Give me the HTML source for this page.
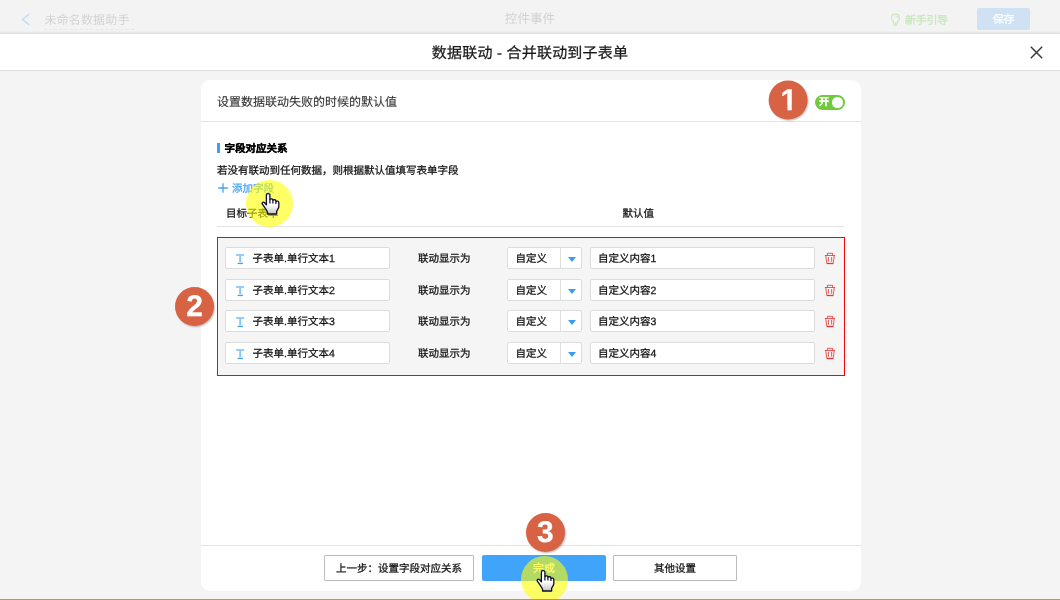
<!DOCTYPE html>
<html lang="zh-CN">
<head>
<meta charset="utf-8">
<title>数据联动 - 合并联动到子表单</title>
<style>
*{box-sizing:border-box;margin:0;padding:0}
html,body{width:1060px;height:600px;overflow:hidden}
body{position:relative;background:#f4f4f4;font-family:"Liberation Sans",sans-serif;font-size:10.5px;color:#000;line-height:1;text-rendering:geometricPrecision;-webkit-text-stroke:0.25px}
#stage{position:absolute;left:0;top:0;width:1060px;height:600px;overflow:hidden;will-change:transform}
.abs{position:absolute;white-space:nowrap}
/* top faded bar */
#topbar{position:absolute;left:0;top:0;width:1060px;height:34px;background:#f3f3f3;overflow:hidden;-webkit-text-stroke:0}
#topbar:after{content:"";position:absolute;left:0;right:0;bottom:0;height:3px;background:linear-gradient(#f3f3f3,#dcdcdc)}
#name{transform:translateY(-.5px);left:44.5px;top:12.5px;font-size:12px;line-height:14px;color:#d3d3d3;letter-spacing:0.15px}
#nameline{left:44px;top:29px;width:90px;height:0;border-top:1px dashed #e7e7e7}
#center{left:0;width:1060px;top:12px;text-align:center;font-size:12.6px;line-height:15px;color:#d2d2d2}
#guide{left:905px;top:14px;font-size:11px;line-height:14px;color:#cbe9c0;font-weight:bold;letter-spacing:-0.3px}
#save{left:977px;top:8px;width:53px;height:22px;background:#cfe2f4;border-radius:2px;color:#f7fbff;font-size:11px;font-weight:bold;line-height:24.6px;text-align:center;letter-spacing:-0.3px}
/* title bar */
#titlebar{position:absolute;left:0;top:34px;width:1060px;height:37px;background:#fff;border-bottom:1px solid #dcdcdc}
#title{left:0;width:1060px;top:11px;text-align:center;letter-spacing:0.2px;font-size:15px;line-height:18px;color:#1a1a1a}
/* card */
#card{position:absolute;left:201px;top:80px;width:660px;height:511px;background:#fff;border-radius:9px}
#cardhead{left:16px;top:15px;font-size:12px;line-height:15px;color:#333;-webkit-text-stroke:0.1px}
.hline{position:absolute;height:1px;background:#e4e4e4}
#toggle{left:614px;top:15px;width:30px;height:15px;border-radius:8px;background:#6fcb3b}
#toggle i{position:absolute;left:17.3px;top:2.3px;width:10.5px;height:10.5px;border-radius:50%;background:#fff}
#toggle b{position:absolute;left:4px;top:2px;font-size:10px;line-height:11px;color:#fff;font-weight:bold}
#bar{left:16px;top:63px;width:3px;height:10px;background:#3d9ff5}
#sect{left:23.5px;top:61.5px;font-size:10.5px;line-height:14px;font-weight:bold;color:#000}
#hint{left:16px;top:83.5px;font-size:10.5px;line-height:14px;color:#111}
#add{left:31px;top:101.5px;font-size:10.5px;line-height:14px;color:#45a3f3}
#th1{left:25px;top:126.7px;font-size:10.5px;line-height:14px;color:#111}
#th2{left:421.5px;top:126.9px;font-size:10.5px;line-height:14px;color:#111}
#redbox{position:absolute;left:16px;top:157px;width:628px;height:139px;border:1px solid #ff0000;background:#f5f5f5}
.row{position:absolute;left:0;width:626px;height:22px}
.inp{position:absolute;top:0;height:22px;background:#fff;border:1px solid #dcdcdc;border-radius:2px;font-size:10.5px;line-height:23.4px;color:#111;white-space:nowrap;overflow:hidden}
.f1{left:7px;width:165px;padding-left:26.5px}
.f1 svg{position:absolute;left:10px;top:6px}
.lab{position:absolute;left:200px;top:0;line-height:24px;font-size:10.5px;color:#111;white-space:nowrap}
.sel{left:289px;width:75px;padding-left:7.5px}
.sel em{position:absolute;left:52px;top:0;width:1px;height:20px;background:#dedede}
.sel u{position:absolute;left:59.5px;top:8.5px;width:0;height:0;border-left:4px solid transparent;border-right:4px solid transparent;border-top:5px solid #399cf2}
.f2{left:372px;width:225px;padding-left:7px}
.trash{position:absolute;left:606px;top:5px}
/* footer */
.btn{position:absolute;top:475px;height:26px;border:1px solid #bcbcbc;background:#fff;border-radius:1px;font-size:10.5px;line-height:26.6px;text-align:center;color:#111;white-space:nowrap}
#b1{left:123px;width:150px}
#b2{left:281px;width:124px;border:0;background:#41a4fb;border-radius:2px;color:#fff;line-height:29px;font-size:11px}
#b3{left:412px;width:124px}
/* annotations */
.num{position:absolute;width:39px;height:39px;border-radius:50%;background:#d86344;color:#fff;font-weight:bold;font-size:30px;line-height:39px;text-align:center;box-shadow:1px 1.2px 1.6px rgba(0,0,0,.24)}
.num.one span{display:inline-block;line-height:1;position:relative;left:0.8px;clip-path:polygon(0 0,100% 0,100% 67%,67.3% 67%,67.3% 100%,41.2% 100%,41.2% 67%,0 67%)}
.hl{position:absolute;width:47px;height:47px;border-radius:50%;background:rgba(255,255,0,.6)}
.hand{position:absolute}
#gold{position:absolute;left:0;top:598.6px;width:1060px;height:2px;background:#c2974a}
</style>
</head>
<body>
<div id="stage">

<div id="topbar">
  <svg class="abs" style="left:21px;top:13px" width="10" height="13" viewBox="0 0 10 13"><path d="M8.2 1 L1.4 6.4 L8.2 11.8" fill="none" stroke="#c3def6" stroke-width="1.5"/></svg>
  <div class="abs" id="name">未命名数据助手</div>
  <div class="abs" id="nameline"></div>
  <div class="abs" id="center">控件事件</div>
  <svg class="abs" style="left:890.4px;top:12.7px" width="10.9" height="13.6" viewBox="0 0 12 15"><path d="M6 1.2 C3.4 1.2 1.6 3.1 1.6 5.4 C1.6 7 2.5 8 3.3 9 C3.8 9.7 4 10.2 4 11 L8 11 C8 10.2 8.2 9.7 8.7 9 C9.5 8 10.4 7 10.4 5.4 C10.4 3.1 8.6 1.2 6 1.2 Z M4.2 12.4 L7.8 12.4 M4.8 13.8 L7.2 13.8 M6.4 3 C7.6 3.2 8.4 4 8.6 5.2" fill="none" stroke="#cbe9c0" stroke-width="1.3" stroke-linecap="round"/></svg>
  <div class="abs" id="guide">新手引导</div>
  <div class="abs" id="save">保存</div>
</div>

<div id="titlebar">
  <div class="abs" id="title">数据联动 - 合并联动到子表单</div>
  <svg class="abs" style="left:1029px;top:11px" width="15" height="15" viewBox="0 0 15 15"><path d="M1.8 1.8 L13.2 13.2 M13.2 1.8 L1.8 13.2" fill="none" stroke="#3a3a3a" stroke-width="1.5"/></svg>
</div>

<div id="card">
  <div class="abs" id="cardhead">设置数据联动失败的时候的默认值</div>
  <div class="abs" id="toggle"><b>开</b><i></i></div>
  <div class="hline" style="left:0;top:41px;width:660px"></div>

  <div class="abs" id="bar"></div>
  <div class="abs" id="sect">字段对应关系</div>
  <div class="abs" id="hint">若没有联动到任何数据，则根据默认值填写表单字段</div>
  <svg class="abs" style="left:17px;top:103px" width="10" height="10" viewBox="0 0 10 10"><path d="M5 0.2 V9.8 M0.2 5 H9.8" stroke="#45a3f3" stroke-width="1.3" fill="none"/></svg>
  <div class="abs" id="add">添加字段</div>
  <div class="abs" id="th1">目标子表单</div>
  <div class="abs" id="th2">默认值</div>
  <div class="hline" style="left:16px;top:146px;width:627px"></div>

  <div id="redbox">
    <div class="row" style="top:9px">
      <div class="inp f1"><svg width="9" height="11" viewBox="0 0 9 11"><rect x="0.2" y="0.2" width="7.9" height="1.6" fill="#7cc0f8"/><rect x="3.2" y="1.8" width="2" height="6.2" fill="#86c5f9"/><rect x="1.6" y="8.7" width="5.3" height="1.4" fill="#3fa3f6"/></svg>子表单.单行文本1</div>
      <div class="lab">联动显示为</div>
      <div class="inp sel">自定义<em></em><u></u></div>
      <div class="inp f2">自定义内容1</div>
      <svg class="trash" width="12" height="13" viewBox="0 0 12 13"><path d="M0.9 3.5 H11.1 M3.4 3.4 V1.3 H8.6 V3.4 M1.7 3.6 L2.9 11.5 H9.1 L10.3 3.6 M4.4 5 V9.6 M7.6 5 V9.6" fill="none" stroke="#f03434" stroke-width="0.95" stroke-opacity="0.88"/><path d="M2.8 11.5 H9.2" stroke="#f03434" stroke-width="1.3"/></svg>
    </div>
    <div class="row" style="top:41px">
      <div class="inp f1"><svg width="9" height="11" viewBox="0 0 9 11"><rect x="0.2" y="0.2" width="7.9" height="1.6" fill="#7cc0f8"/><rect x="3.2" y="1.8" width="2" height="6.2" fill="#86c5f9"/><rect x="1.6" y="8.7" width="5.3" height="1.4" fill="#3fa3f6"/></svg>子表单.单行文本2</div>
      <div class="lab">联动显示为</div>
      <div class="inp sel">自定义<em></em><u></u></div>
      <div class="inp f2">自定义内容2</div>
      <svg class="trash" width="12" height="13" viewBox="0 0 12 13"><path d="M0.9 3.5 H11.1 M3.4 3.4 V1.3 H8.6 V3.4 M1.7 3.6 L2.9 11.5 H9.1 L10.3 3.6 M4.4 5 V9.6 M7.6 5 V9.6" fill="none" stroke="#f03434" stroke-width="0.95" stroke-opacity="0.88"/><path d="M2.8 11.5 H9.2" stroke="#f03434" stroke-width="1.3"/></svg>
    </div>
    <div class="row" style="top:72px">
      <div class="inp f1"><svg width="9" height="11" viewBox="0 0 9 11"><rect x="0.2" y="0.2" width="7.9" height="1.6" fill="#7cc0f8"/><rect x="3.2" y="1.8" width="2" height="6.2" fill="#86c5f9"/><rect x="1.6" y="8.7" width="5.3" height="1.4" fill="#3fa3f6"/></svg>子表单.单行文本3</div>
      <div class="lab">联动显示为</div>
      <div class="inp sel">自定义<em></em><u></u></div>
      <div class="inp f2">自定义内容3</div>
      <svg class="trash" width="12" height="13" viewBox="0 0 12 13"><path d="M0.9 3.5 H11.1 M3.4 3.4 V1.3 H8.6 V3.4 M1.7 3.6 L2.9 11.5 H9.1 L10.3 3.6 M4.4 5 V9.6 M7.6 5 V9.6" fill="none" stroke="#f03434" stroke-width="0.95" stroke-opacity="0.88"/><path d="M2.8 11.5 H9.2" stroke="#f03434" stroke-width="1.3"/></svg>
    </div>
    <div class="row" style="top:104px">
      <div class="inp f1"><svg width="9" height="11" viewBox="0 0 9 11"><rect x="0.2" y="0.2" width="7.9" height="1.6" fill="#7cc0f8"/><rect x="3.2" y="1.8" width="2" height="6.2" fill="#86c5f9"/><rect x="1.6" y="8.7" width="5.3" height="1.4" fill="#3fa3f6"/></svg>子表单.单行文本4</div>
      <div class="lab">联动显示为</div>
      <div class="inp sel">自定义<em></em><u></u></div>
      <div class="inp f2">自定义内容4</div>
      <svg class="trash" width="12" height="13" viewBox="0 0 12 13"><path d="M0.9 3.5 H11.1 M3.4 3.4 V1.3 H8.6 V3.4 M1.7 3.6 L2.9 11.5 H9.1 L10.3 3.6 M4.4 5 V9.6 M7.6 5 V9.6" fill="none" stroke="#f03434" stroke-width="0.95" stroke-opacity="0.88"/><path d="M2.8 11.5 H9.2" stroke="#f03434" stroke-width="1.3"/></svg>
    </div>
  </div>

  <div class="hline" style="left:0;top:465px;width:660px"></div>
  <div class="btn" id="b1">上一步：设置字段对应关系</div>
  <div class="btn" id="b2">完成</div>
  <div class="btn" id="b3">其他设置</div>
</div>

<!-- tutorial annotations -->
<div class="num one" style="left:768px;top:80px;transform:translate(.6px,.6px)"><span>1</span></div>
<div class="num" style="left:175px;top:287px">2</div>
<div class="num" style="left:525.8px;top:513px">3</div>

<div class="hl" style="left:246px;top:179.5px"></div>
<div class="hl" style="left:521px;top:555.5px"></div>

<svg class="hand" style="left:261px;top:192px" width="20" height="24" viewBox="0 0 20 24">
  <defs><linearGradient id="hg" x1="0" y1="0" x2="0" y2="1"><stop offset="0.55" stop-color="#fff"/><stop offset="1" stop-color="#c4c4c4"/></linearGradient></defs>
  <path d="M5.4 2.6 C5.4 1.3 8.9 1.3 8.9 2.6 V7.6 C9.3 6.4 11.9 6.6 11.9 7.9 V8.4 C12.4 7.3 14.9 7.6 14.9 8.9 V9.6 C15.5 8.7 17.8 9 17.8 10.4 V14.8 C17.8 16.6 15.9 18 15.6 19.4 V22 H6.6 V20.4 C5.6 18.2 3.6 15.4 1.5 12.4 C0.4 10.8 2.3 9.4 3.6 10.8 L5.4 12.8 Z" fill="url(#hg)" stroke="#0b0b2b" stroke-width="1.3" stroke-linejoin="round"/>
  <path d="M8.9 7.6 V11.4 M11.9 8.4 V11.6 M14.9 9.6 V12" stroke="#0b0b2b" stroke-width="1.2" fill="none"/>
</svg>
<svg class="hand" style="left:536px;top:569px" width="20" height="24" viewBox="0 0 20 24">
  <path d="M5.4 2.6 C5.4 1.3 8.9 1.3 8.9 2.6 V7.6 C9.3 6.4 11.9 6.6 11.9 7.9 V8.4 C12.4 7.3 14.9 7.6 14.9 8.9 V9.6 C15.5 8.7 17.8 9 17.8 10.4 V14.8 C17.8 16.6 15.9 18 15.6 19.4 V22 H6.6 V20.4 C5.6 18.2 3.6 15.4 1.5 12.4 C0.4 10.8 2.3 9.4 3.6 10.8 L5.4 12.8 Z" fill="url(#hg)" stroke="#0b0b2b" stroke-width="1.3" stroke-linejoin="round"/>
  <path d="M8.9 7.6 V11.4 M11.9 8.4 V11.6 M14.9 9.6 V12" stroke="#0b0b2b" stroke-width="1.2" fill="none"/>
</svg>

<div id="gold"></div>
</div>
</body>
</html>
